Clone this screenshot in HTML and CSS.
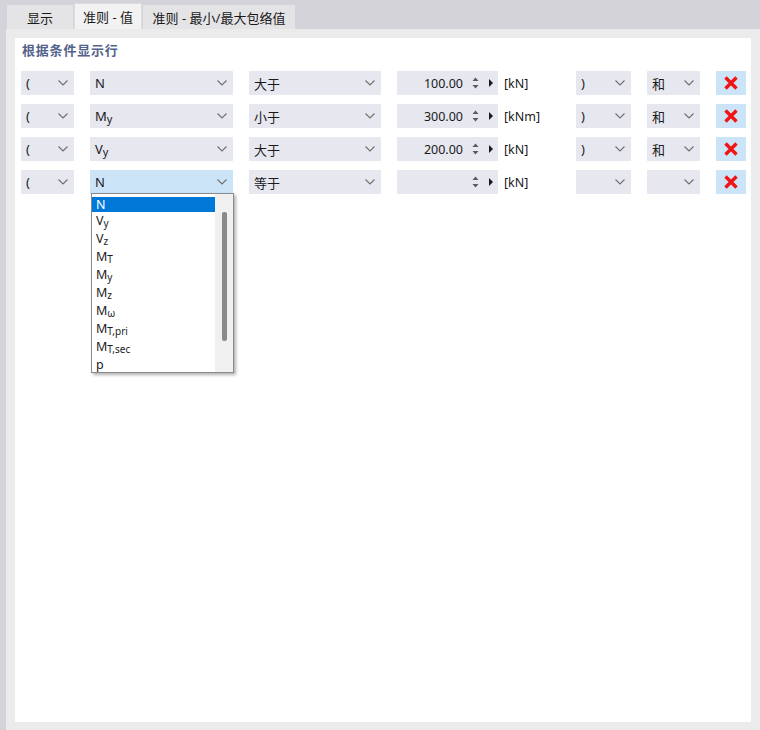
FILE: index.html
```html
<!DOCTYPE html>
<html lang="zh">
<head>
<meta charset="utf-8">
<link rel="stylesheet" href="styles.css">
</head>
<body>
<div class="tabbar">
  <div class="tab t1">显示</div>
  <div class="tab t2 active">准则 - 值</div>
  <div class="tab t3">准则 - 最小/最大包络值</div>
</div>
<div class="panel">
  <div class="page">
    <div class="title">根据条件显示行</div>
    <div class="rows">
      <div class="row">
        <div class="combo"><span class="val">(</span><svg class="chev" viewBox="0 0 10 6"><polyline points="0.5,0.5 5,5 9.5,0.5"/></svg></div>
        <div class="combo"><span class="val">N</span><svg class="chev" viewBox="0 0 10 6"><polyline points="0.5,0.5 5,5 9.5,0.5"/></svg></div>
        <div class="combo"><span class="val cjk">大于</span><svg class="chev" viewBox="0 0 10 6"><polyline points="0.5,0.5 5,5 9.5,0.5"/></svg></div>
        <div class="numcell">
          <div class="num"><span class="nval">100.00</span><svg class="spin" viewBox="0 0 7 14"><polygon points="3.5,1.5 6.5,5 0.5,5"/><polygon points="0.5,9 6.5,9 3.5,12.5"/></svg><svg class="arr" viewBox="0 0 4 8"><polygon points="0,0 4,4 0,8"/></svg></div>
          <span class="unit">[kN]</span>
        </div>
        <div class="combo"><span class="val">)</span><svg class="chev" viewBox="0 0 10 6"><polyline points="0.5,0.5 5,5 9.5,0.5"/></svg></div>
        <div class="combo"><span class="val cjk">和</span><svg class="chev" viewBox="0 0 10 6"><polyline points="0.5,0.5 5,5 9.5,0.5"/></svg></div>
        <div class="del"><svg viewBox="0 0 14 14"><path d="M1.5 1.5 L12.5 12.5 M12.5 1.5 L1.5 12.5"/></svg></div>
      </div>
      <div class="row">
        <div class="combo"><span class="val">(</span><svg class="chev" viewBox="0 0 10 6"><polyline points="0.5,0.5 5,5 9.5,0.5"/></svg></div>
        <div class="combo"><span class="val">M<span class="sub">y</span></span><svg class="chev" viewBox="0 0 10 6"><polyline points="0.5,0.5 5,5 9.5,0.5"/></svg></div>
        <div class="combo"><span class="val cjk">小于</span><svg class="chev" viewBox="0 0 10 6"><polyline points="0.5,0.5 5,5 9.5,0.5"/></svg></div>
        <div class="numcell">
          <div class="num"><span class="nval">300.00</span><svg class="spin" viewBox="0 0 7 14"><polygon points="3.5,1.5 6.5,5 0.5,5"/><polygon points="0.5,9 6.5,9 3.5,12.5"/></svg><svg class="arr" viewBox="0 0 4 8"><polygon points="0,0 4,4 0,8"/></svg></div>
          <span class="unit">[kNm]</span>
        </div>
        <div class="combo"><span class="val">)</span><svg class="chev" viewBox="0 0 10 6"><polyline points="0.5,0.5 5,5 9.5,0.5"/></svg></div>
        <div class="combo"><span class="val cjk">和</span><svg class="chev" viewBox="0 0 10 6"><polyline points="0.5,0.5 5,5 9.5,0.5"/></svg></div>
        <div class="del"><svg viewBox="0 0 14 14"><path d="M1.5 1.5 L12.5 12.5 M12.5 1.5 L1.5 12.5"/></svg></div>
      </div>
      <div class="row">
        <div class="combo"><span class="val">(</span><svg class="chev" viewBox="0 0 10 6"><polyline points="0.5,0.5 5,5 9.5,0.5"/></svg></div>
        <div class="combo"><span class="val">V<span class="sub">y</span></span><svg class="chev" viewBox="0 0 10 6"><polyline points="0.5,0.5 5,5 9.5,0.5"/></svg></div>
        <div class="combo"><span class="val cjk">大于</span><svg class="chev" viewBox="0 0 10 6"><polyline points="0.5,0.5 5,5 9.5,0.5"/></svg></div>
        <div class="numcell">
          <div class="num"><span class="nval">200.00</span><svg class="spin" viewBox="0 0 7 14"><polygon points="3.5,1.5 6.5,5 0.5,5"/><polygon points="0.5,9 6.5,9 3.5,12.5"/></svg><svg class="arr" viewBox="0 0 4 8"><polygon points="0,0 4,4 0,8"/></svg></div>
          <span class="unit">[kN]</span>
        </div>
        <div class="combo"><span class="val">)</span><svg class="chev" viewBox="0 0 10 6"><polyline points="0.5,0.5 5,5 9.5,0.5"/></svg></div>
        <div class="combo"><span class="val cjk">和</span><svg class="chev" viewBox="0 0 10 6"><polyline points="0.5,0.5 5,5 9.5,0.5"/></svg></div>
        <div class="del"><svg viewBox="0 0 14 14"><path d="M1.5 1.5 L12.5 12.5 M12.5 1.5 L1.5 12.5"/></svg></div>
      </div>
      <div class="row">
        <div class="combo"><span class="val">(</span><svg class="chev" viewBox="0 0 10 6"><polyline points="0.5,0.5 5,5 9.5,0.5"/></svg></div>
        <div class="combo focus"><span class="val">N</span><svg class="chev" viewBox="0 0 10 6"><polyline points="0.5,0.5 5,5 9.5,0.5"/></svg></div>
        <div class="combo"><span class="val cjk">等于</span><svg class="chev" viewBox="0 0 10 6"><polyline points="0.5,0.5 5,5 9.5,0.5"/></svg></div>
        <div class="numcell">
          <div class="num"><span class="nval"></span><svg class="spin" viewBox="0 0 7 14"><polygon points="3.5,1.5 6.5,5 0.5,5"/><polygon points="0.5,9 6.5,9 3.5,12.5"/></svg><svg class="arr" viewBox="0 0 4 8"><polygon points="0,0 4,4 0,8"/></svg></div>
          <span class="unit">[kN]</span>
        </div>
        <div class="combo"><span class="val"></span><svg class="chev" viewBox="0 0 10 6"><polyline points="0.5,0.5 5,5 9.5,0.5"/></svg></div>
        <div class="combo"><span class="val"></span><svg class="chev" viewBox="0 0 10 6"><polyline points="0.5,0.5 5,5 9.5,0.5"/></svg></div>
        <div class="del"><svg viewBox="0 0 14 14"><path d="M1.5 1.5 L12.5 12.5 M12.5 1.5 L1.5 12.5"/></svg></div>
      </div>
    </div>
    <div class="listbox">
      <div class="items">
        <div class="item sel"><span>N</span></div>
        <div class="item">V<span class="sub">y</span></div>
        <div class="item">V<span class="sub">z</span></div>
        <div class="item">M<span class="sub">T</span></div>
        <div class="item">M<span class="sub">y</span></div>
        <div class="item">M<span class="sub">z</span></div>
        <div class="item">M<span class="sub">ω</span></div>
        <div class="item">M<span class="sub">T,pri</span></div>
        <div class="item">M<span class="sub">T,sec</span></div>
        <div class="item">p</div>
      </div>
      <div class="scroll"><div class="thumb"></div></div>
    </div>
  </div>
</div>
</body>
</html>
```

FILE: styles.css
```css
html, body {
  margin: 0;
  padding: 0;
}
body {
  width: 760px;
  height: 730px;
  background: #d3d3d9;
  font-family: "Noto Sans", "Noto Sans CJK SC", sans-serif;
  font-size: 12px;
  color: #1a1a1a;
  overflow: hidden;
}
.tabbar {
  height: 29px;
  display: flex;
  align-items: flex-end;
  padding-left: 7px;
  box-sizing: border-box;
}
.tab {
  height: 24px;
  background: #e4e4e6;
  margin-right: 1px;
  display: flex;
  align-items: center;
  justify-content: center;
  font-family: "Noto Sans", "Noto Sans CJK SC", sans-serif;
  font-size: 13px;
  color: #1a1a1a;
  box-sizing: border-box;
}
.t1 { width: 66px; }
.t2 { width: 68px; }
.t3 { width: 152px; }
.tab.active {
  height: 26px;
  background: #f2f2f2;
  border: 1px solid #dcdcdc;
  border-bottom: none;
  padding-bottom: 1px;
}
.panel {
  margin-left: 6px;
  height: 701px;
  background: #ebebeb;
  padding: 9px 9px 8px 9px;
  box-sizing: border-box;
}
.page {
  position: relative;
  height: 684px;
  background: #ffffff;
}
.title {
  padding: 2px 0 0 7px;
  height: 20px;
  line-height: 20px;
  font-family: "Noto Sans CJK SC", sans-serif;
  font-size: 13px;
  font-weight: bold;
  letter-spacing: 0.8px;
  color: #53628a;
}
.rows {
  margin: 11px 0 0 6px;
  display: flex;
  flex-direction: column;
  gap: 9px;
}
.row {
  display: grid;
  grid-template-columns: 53px 143px 132px 163px 55px 53px 30px;
  column-gap: 16px;
  height: 24px;
}
.combo {
  display: flex;
  align-items: center;
  justify-content: space-between;
  background: #e7e7f0;
  padding: 0 6px 0 5px;
  height: 24px;
  box-sizing: border-box;
}
.combo.focus {
  background: #cce4f7;
}
.val {
  font-size: 13px;
  color: #1a1a1a;
  white-space: nowrap;
}
.val.cjk {
  font-family: "Noto Sans CJK SC", sans-serif;
  font-size: 13px;
}
.sub {
  font-size: 11px;
  position: relative;
  top: 2px;
}
.chev {
  width: 10px;
  height: 6px;
  fill: none;
  stroke: #6e6e6e;
  stroke-width: 1.1;
}
.numcell {
  display: flex;
  align-items: center;
}
.num {
  width: 101px;
  height: 24px;
  background: #e7e7f0;
  display: flex;
  align-items: center;
  padding-right: 5px;
  box-sizing: border-box;
}
.nval {
  flex: 1;
  text-align: right;
  font-size: 12.5px;
  color: #1a1a1a;
}
.spin {
  width: 7px;
  height: 14px;
  margin-left: 9px;
  fill: #5a5a5a;
}
.arr {
  width: 4px;
  height: 8px;
  margin-left: 10px;
  fill: #1a1a1a;
}
.unit {
  margin-left: 6px;
  font-size: 12.5px;
  color: #1a1a1a;
}
.del {
  background: #cce4f7;
  display: flex;
  align-items: center;
  justify-content: center;
  height: 24px;
}
.del svg {
  width: 14px;
  height: 14px;
  fill: none;
  stroke: #f01414;
  stroke-width: 3.4;
}
.listbox {
  position: absolute;
  left: 76px;
  top: 155px;
  width: 143px;
  height: 180px;
  background: #ffffff;
  border: 1px solid #8a8a8a;
  box-sizing: border-box;
  box-shadow: 2px 2px 3px rgba(0, 0, 0, 0.3);
  display: flex;
}
.items {
  flex: 1;
}
.item {
  height: 18px;
  line-height: 18px;
  padding-left: 4px;
  font-size: 12.5px;
  color: #1a1a1a;
  white-space: nowrap;
}
.item .sub {
  font-size: 10px;
  top: 2px;
}
.item.sel {
  height: 15px;
  line-height: 15px;
  margin-top: 3px;
  background: #0078d7;
  color: #ffffff;
}
.scroll {
  width: 18px;
  background: #f0f0f0;
  display: flex;
  justify-content: center;
  padding-top: 18px;
}
.thumb {
  width: 5px;
  height: 129px;
  background: #8a8a8a;
  border-radius: 2px;
}
```
